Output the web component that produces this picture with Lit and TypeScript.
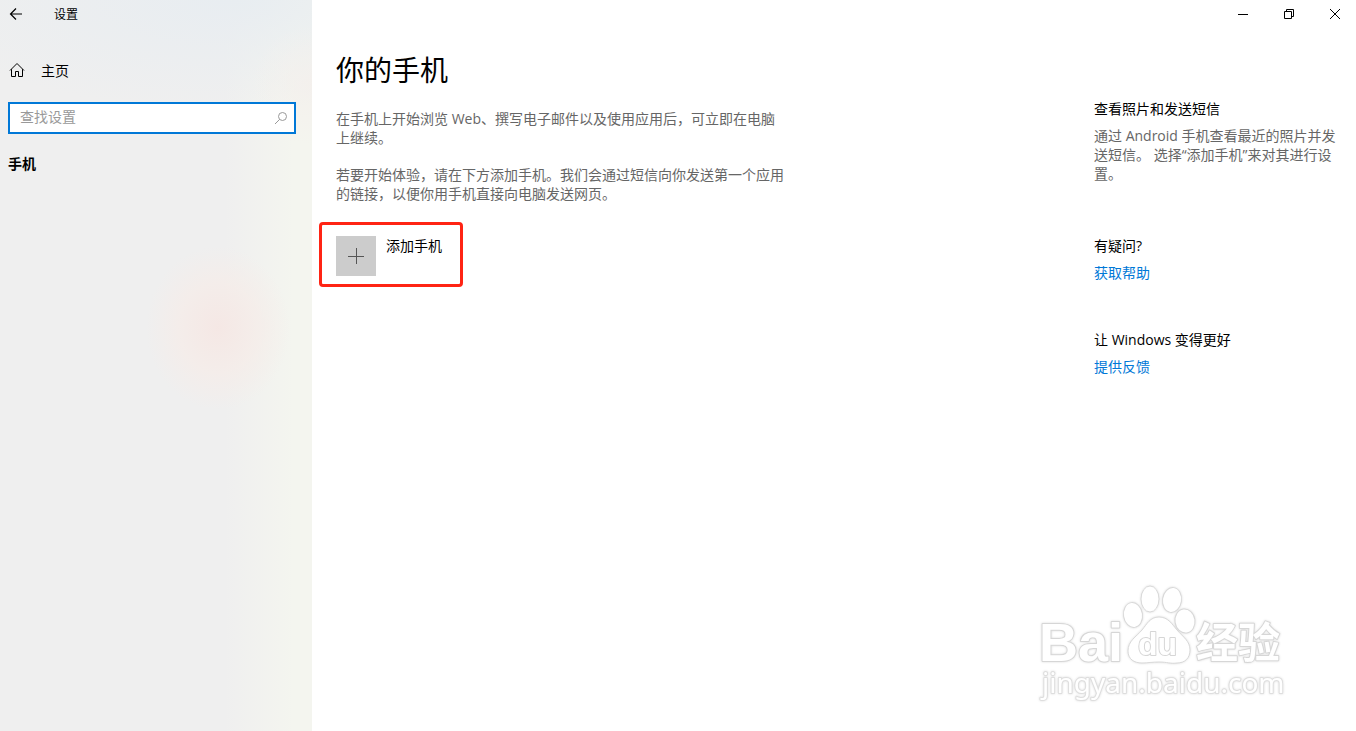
import { LitElement, html, css } from "lit";
import { customElement } from "lit/decorators.js";

@customElement("baidu-watermark")
class BaiduWatermark extends LitElement {
  static styles = css`
    :host { display: block; pointer-events: none; }
    .art { display: block; filter: drop-shadow(0 0 1px rgba(0, 0, 0, 0.14)); }
    .shape { fill: #fff; stroke: #d8d8d8; stroke-width: 1; }
    .word { fill: #fff; stroke: #d6d6d6; stroke-width: 2; stroke-linejoin: round; paint-order: stroke; }
    .latin { font: bold 54px "Liberation Sans", sans-serif; }
    .inner { font: bold 32px "Liberation Sans", sans-serif; }
    .cjk { font: bold 42px "Noto Sans CJK SC", sans-serif; }
    .site { font: 28px "Noto Sans", "Open Sans", sans-serif; stroke: #dedede; }
  `;

  render() {
    return html`
      <svg class="art" width="260" height="130" viewBox="0 0 260 130" aria-hidden="true">
        <text class="word latin" x="9" y="86">Bai</text>
        <ellipse class="shape" cx="103" cy="40" rx="9.5" ry="12.5" transform="rotate(-8 103 40)" />
        <ellipse class="shape" cx="120" cy="24" rx="9" ry="13" />
        <ellipse class="shape" cx="142" cy="25" rx="9.5" ry="12.5" transform="rotate(8 142 25)" />
        <ellipse class="shape" cx="155" cy="46" rx="10" ry="12" transform="rotate(-8 155 46)" />
        <path class="shape" d="M129 42 C120 42 117 49 112 55 C106 62 98 66 98 76 C98 84 104 88 112 88 C118 88 122 87 129 87 C137 87 141 89 147 88 C155 88 160 83 160 75 C160 66 153 62 147 55 C142 49 138 42 129 42 Z" />
        <text class="word inner" x="108" y="80">du</text>
        <text class="word cjk" x="166" y="83">经验</text>
        <text class="word site" x="12" y="118">jingyan.baidu.com</text>
      </svg>
    `;
  }
}

@customElement("app-root")
class AppRoot extends LitElement {
  static styles = css`
    :host {
      display: block;
      font-family: "Open Sans", "Noto Sans CJK SC", sans-serif;
      font-size: 14px;
      line-height: 19px;
      color: #000;
    }
    * { box-sizing: border-box; }
    h1, h2, p { margin: 0; font-weight: 400; }
    button { font: inherit; color: inherit; background: none; border: 0; padding: 0; margin: 0; }
    a { color: #0078d7; text-decoration: none; }
    svg { display: block; fill: none; stroke: currentColor; }
    .window {
      position: relative;
      display: grid;
      grid-template-columns: 312px minmax(0, 1fr);
      min-height: 100vh;
      overflow: hidden;
      background: #fff;
    }
    .sidebar {
      background:
        radial-gradient(ellipse 72px 82px at 218px 328px, rgba(245, 231, 228, 0.95), rgba(246, 236, 232, 0.7) 55%, rgba(243, 240, 236, 0)),
        radial-gradient(circle 60px at 312px 85px, rgba(244, 239, 236, 0.8), rgba(244, 239, 236, 0)),
        radial-gradient(ellipse 320px 110px at 230px 0, #e8edf1, rgba(236, 239, 241, 0)),
        linear-gradient(90deg, rgba(244, 245, 239, 0) 72%, #f4f5ef 94%),
        #efefef;
    }
    .titlebar { display: flex; align-items: center; height: 28px; font-size: 12px; }
    .back { width: 48px; padding-left: 9px; }
    .title { padding-left: 6px; }
    .home { display: flex; align-items: center; gap: 16px; width: 100%; height: 28px; margin-top: 28px; padding-left: 9px; }
    .search {
      display: flex;
      align-items: center;
      height: 32px;
      margin: 18px 16px 0 8px;
      padding: 0 6px 0 10px;
      background: #fff;
      border: 2px solid #0078d7;
      color: #999;
    }
    .field { flex: 1; min-width: 0; padding: 0 0 4px; border: 0; outline: 0; background: none; font: inherit; color: #000; }
    .field::placeholder { color: #999; opacity: 1; }
    .section { margin: 20px 8px 0; font-size: 14px; font-weight: 700; }
    .content { display: flex; flex-direction: column; }
    .controls { display: flex; justify-content: flex-end; margin-right: -2px; }
    .control { display: grid; place-items: center; width: 46px; height: 28px; }
    .columns { display: flex; justify-content: space-between; gap: 24px; padding: 22px 14px 24px 24px; }
    .page { flex: 0 1 450px; color: #666; }
    .heading { margin-bottom: 19px; font-size: 28px; line-height: 40px; color: #000; }
    .text { margin-bottom: 18px; }
    .add {
      display: flex;
      align-items: flex-start;
      gap: 10px;
      margin: 19px 0 0 -17px;
      padding: 11px 18px 8px 14px;
      border: 3px solid #ff2414;
      border-radius: 4px;
      color: #000;
    }
    .plus { display: grid; place-items: center; width: 40px; height: 40px; background: #ccc; color: #555; }
    .aside { flex: 0 0 248px; display: flex; flex-direction: column; gap: 48px; padding-top: 49px; }
    .group { display: flex; flex-direction: column; gap: 8px; }
    .subhead { font-size: 14px; }
    .note { margin-bottom: 5px; color: #666; }
    .mark { position: absolute; right: 66px; bottom: 26px; }
  `;

  render() {
    return html`
      <div class="window">
        <nav class="sidebar">
          <div class="titlebar">
            <button class="back" aria-label="返回">
              <svg width="14" height="14" viewBox="0 0 14 14" stroke-width="1.2"><path d="M13 7H1.5M7 1.5L1.5 7L7 12.5" /></svg>
            </button>
            <span class="title">设置</span>
          </div>
          <button class="home">
            <svg width="16" height="16" viewBox="0 0 16 16"><path d="M1 8.5L8 1.5L15 8.5M2.5 7.2V14.5H6.5V9.5H9.5V14.5H13.5V7.2" /></svg>
            <span>主页</span>
          </button>
          <div class="search">
            <input class="field" type="text" placeholder="查找设置" aria-label="查找设置" />
            <svg width="14" height="14" viewBox="0 0 14 14"><circle cx="8.5" cy="5.5" r="4" /><path d="M5.6 8.4L1 13" /></svg>
          </div>
          <h2 class="section">手机</h2>
        </nav>
        <main class="content">
          <div class="controls">
            <button class="control" aria-label="最小化">
              <svg width="10" height="10" viewBox="0 0 10 10"><path d="M0 5.5H10" /></svg>
            </button>
            <button class="control" aria-label="还原">
              <svg width="10" height="10" viewBox="0 0 10 10"><path d="M.5 2.5H7.5V9.5H.5ZM2.5 2.5V.5H9.5V7.5H7.5" /></svg>
            </button>
            <button class="control" aria-label="关闭">
              <svg width="10" height="10" viewBox="0 0 10 10"><path d="M0 0L10 10M10 0L0 10" /></svg>
            </button>
          </div>
          <div class="columns">
            <section class="page">
              <h1 class="heading">你的手机</h1>
              <p class="text">在手机上开始浏览 Web、撰写电子邮件以及使用应用后，可立即在电脑上继续。</p>
              <p class="text">若要开始体验，请在下方添加手机。我们会通过短信向你发送第一个应用的链接，以便你用手机直接向电脑发送网页。</p>
              <button class="add">
                <span class="plus">
                  <svg width="16" height="16" viewBox="0 0 16 16"><path d="M0 8.5H16M8.5 0V16" /></svg>
                </span>
                <span>添加手机</span>
              </button>
            </section>
            <aside class="aside">
              <section class="group">
                <h2 class="subhead">查看照片和发送短信</h2>
                <p class="note">通过 Android 手机查看最近的照片并发送短信。 选择“添加手机”来对其进行设置。</p>
              </section>
              <section class="group">
                <h2 class="subhead">有疑问?</h2>
                <a href="#help">获取帮助</a>
              </section>
              <section class="group">
                <h2 class="subhead">让 Windows 变得更好</h2>
                <a href="#feedback">提供反馈</a>
              </section>
            </aside>
          </div>
        </main>
        <baidu-watermark class="mark"></baidu-watermark>
      </div>
    `;
  }
}
